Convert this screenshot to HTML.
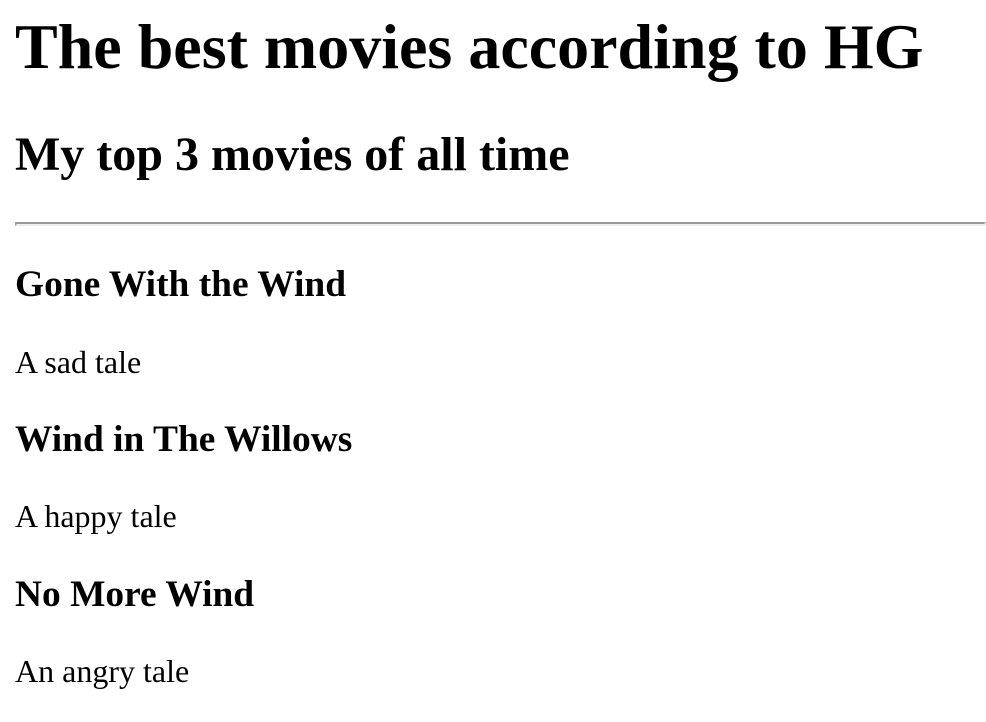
<!DOCTYPE html>
<html style="zoom:2">
<head>
<meta charset="utf-8">
<style>
body{margin:0 8px 0 7.5px;font-family:"Liberation Serif",serif;color:#000;background:#fff;}
h1{margin-top:5px;}
hr{margin:6.5px -8px 9.5px 0;}
</style>
</head>
<body>
<h1>The best movies according to HG</h1>
<h2>My top 3 movies of all time</h2>
<hr>
<h3>Gone With the Wind</h3>
<p>A sad tale</p>
<h3>Wind in The Willows</h3>
<p>A happy tale</p>
<h3>No More Wind</h3>
<p>An angry tale</p>
</body>
</html>
